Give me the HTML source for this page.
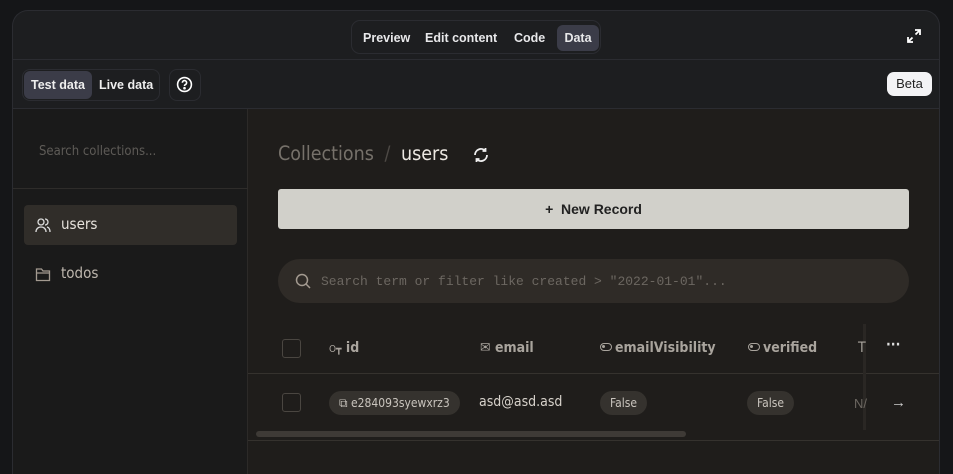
<!DOCTYPE html>
<html style="width:953px;height:474px;overflow:hidden"><head><style>
*{box-sizing:border-box;margin:0;padding:0}
body{width:953px;height:474px;background:#151618;font-family:"Liberation Sans",sans-serif;overflow:hidden;position:relative}
.panel{position:absolute;left:12px;top:10px;width:928px;height:464px;background:#1d1e20;border:1px solid #2b2c31;border-bottom:none;border-radius:16px 16px 0 0;overflow:hidden}
.abs{position:absolute}
.tabs{left:338px;top:9px;height:34px;width:250px;border:1px solid #2b2c31;border-radius:9px}
.tab{position:absolute;top:4px;height:26px;line-height:26px;font-size:12.5px;color:#e8e8ea;font-weight:bold}
.hl1{left:0;top:48px;width:100%;height:1px;background:#2b2c31}
.hl2{left:0;top:97px;width:100%;height:1px;background:#2b2c31}
.side{left:0;top:98px;width:235px;height:380px;background:#1a1a1a;border-right:1px solid #2c2a28}
.main{left:235px;top:98px;width:700px;height:380px;background:#1f1d1b}
.mono{font-family:"Liberation Mono",monospace}
.th{position:absolute;top:231px;font-size:14px;color:#a9a49d;font-family:"DejaVu Sans Condensed","DejaVu Sans",sans-serif;font-weight:bold}
.pill{position:absolute;background:#35322e;border-radius:12px;color:#c9c4bd;font-size:12px;height:24px;line-height:24px;padding:0 10px;font-family:"DejaVu Sans Condensed","DejaVu Sans",sans-serif}
.cb{position:absolute;width:19px;height:19px;border:1.5px solid #4a4641;border-radius:3px}
.tg{display:inline-block;width:12px;height:8px;border:1.3px solid #a9a49d;border-radius:4px;position:relative;margin-right:3px;vertical-align:1px}
.tg:after{content:"";position:absolute;left:1px;top:1px;width:3px;height:3px;background:#a9a49d;border-radius:2px}
</style></head><body>
<div class="panel">
 <div class="abs tabs">
  <div class="tab" style="left:11px">Preview</div>
  <div class="tab" style="left:73px">Edit content</div>
  <div class="tab" style="left:162px">Code</div>
  <div class="tab" style="left:205px;width:42px;background:#3b3c48;border-radius:6px;text-align:center">Data</div>
 </div>
 <svg class="abs" style="left:893px;top:17px" width="16" height="16" viewBox="0 0 16 16" fill="none" stroke="#fff" stroke-width="1.8"><path d="M9 2h5v5M14 2L9.5 6.5M7 14H2V9M2 14l4.5-4.5"/></svg>
 <div class="abs hl1"></div>
 <div class="abs" style="left:9px;top:58px;width:138px;height:32px;border:1px solid #2b2c31;border-radius:8px"></div>
 <div class="abs" style="left:11px;top:60px;width:68px;height:28px;background:#3b3c48;border-radius:6px;color:#eee;font-size:12.5px;font-weight:bold;line-height:28px;text-align:center">Test data</div>
 <div class="abs" style="left:86px;top:60px;color:#eee;font-size:12.5px;font-weight:bold;line-height:28px">Live data</div>
 <div class="abs" style="left:156px;top:58px;width:32px;height:32px;border:1px solid #2b2c31;border-radius:8px"></div>
 <svg class="abs" style="left:163px;top:65px" width="17" height="17" viewBox="0 0 16 16" fill="none" stroke="#fff" stroke-width="1.5"><circle cx="8" cy="8" r="6.5"/><path d="M6 6.3a2 2 0 1 1 2.6 1.9c-.5.2-.6.6-.6 1.2"/><circle cx="8" cy="11.5" r=".5" fill="#fff"/></svg>
 <div class="abs" style="left:874px;top:61px;width:45px;height:24px;background:#f3f3f5;border-radius:7px;color:#222;font-size:13px;line-height:24px;text-align:center">Beta</div>
 <div class="abs hl2"></div>
 <div class="abs side">
  <div class="abs" style="left:26px;top:35px;font-size:13px;color:#5e5b57;font-family:'DejaVu Sans Condensed','DejaVu Sans',sans-serif">Search collections...</div>
  <div class="abs" style="left:0;top:79px;width:235px;height:1px;background:#2e2c2a"></div>
  <div class="abs" style="left:11px;top:96px;width:213px;height:40px;background:#302d29;border-radius:4px"></div>
  <svg class="abs" style="left:22px;top:108px" width="16" height="16" viewBox="0 0 16 16" fill="none" stroke="#ddd" stroke-width="1.3"><circle cx="6" cy="5" r="3"/><path d="M1 15c0-3 2-5 5-5s5 2 5 5M10 2a3 3 0 0 1 0 6M12 10c2 .5 3 2.5 3 5"/></svg>
  <div class="abs" style="left:48px;top:106px;font-size:15px;color:#e6e2dc;font-family:'DejaVu Sans Condensed','DejaVu Sans',sans-serif">users</div>
  <svg class="abs" style="left:22px;top:158px" width="16" height="15" viewBox="0 0 16 15" fill="none" stroke="#a39a90" stroke-width="1.3"><path d="M1.5 2h5l1.5 2h6.5v9.5h-13zM1.5 6h13"/></svg>
  <div class="abs" style="left:48px;top:155px;font-size:15px;color:#bdb6ad;font-family:'DejaVu Sans Condensed','DejaVu Sans',sans-serif">todos</div>
 </div>
 <div class="abs main">
  <div class="abs" style="left:30px;top:33px;font-size:19.5px;color:#76716a;font-family:'DejaVu Sans Condensed','DejaVu Sans',sans-serif">Collections <span style="color:#4d4945;margin:0 5px">/</span> <span style="color:#ece8e2">users</span></div>
  <svg class="abs" style="left:224px;top:37px" width="18" height="18" viewBox="0 0 18 18" fill="none" stroke="#eee" stroke-width="1.8"><path d="M3 9a6 6 0 0 1 10.5-4M15 9a6 6 0 0 1-10.5 4M13.5 2v3h-3M4.5 16v-3h3"/></svg>
  <div class="abs" style="left:30px;top:80px;width:631px;height:40px;background:#d1d0ca;border-radius:3px;color:#222;font-size:14px;font-weight:bold;text-align:center;line-height:40px">+&nbsp; New Record</div>
  <div class="abs" style="left:30px;top:150px;width:631px;height:44px;background:#2f2b27;border-radius:22px"></div>
  <svg class="abs" style="left:47px;top:164px" width="16" height="16" viewBox="0 0 16 16" fill="none" stroke="#a39a90" stroke-width="1.5"><circle cx="7" cy="7" r="5.5"/><path d="M11 11l4 4"/></svg>
  <div class="abs mono" style="left:73px;top:165px;font-size:13px;color:#6c6761">Search term or filter like created &gt; "2022-01-01"...</div>
  <div class="abs" style="left:0;top:264px;width:700px;height:1px;background:#35322e"></div>
  <div class="abs" style="left:0;top:331px;width:700px;height:1px;background:#35322e"></div>
  <div class="abs" style="left:8px;top:322px;width:430px;height:6px;background:#3e3a36;border-radius:3px"></div>
  <div class="abs" style="left:615px;top:215px;width:3px;height:106px;background:#2a2724"></div>
 </div>
 <div class="cb" style="left:269px;top:328px"></div>
 <div class="th" style="left:316px;top:329px"><span style="font-size:10px;font-weight:normal">O┳</span> id</div>
 <div class="th" style="left:467px;top:329px"><span style="font-weight:normal">✉</span> email</div>
 <div class="th" style="left:587px;top:329px"><span class="tg"></span>emailVisibility</div>
 <div class="th" style="left:735px;top:329px"><span class="tg"></span>verified</div>
 <div class="th" style="left:845px;top:329px;font-weight:normal">T</div>
 <div class="th" style="left:873px;top:326px;color:#ddd">···</div>
 <div class="cb" style="left:269px;top:382px"></div>
 <div class="pill" style="left:316px;top:380px">⧉ e284093syewxrz3</div>
 <div class="abs" style="left:466px;top:383px;font-size:14px;color:#d6d1ca;font-family:'DejaVu Sans Condensed','DejaVu Sans',sans-serif">asd@asd.asd</div>
 <div class="pill" style="left:587px;top:380px">False</div>
 <div class="pill" style="left:734px;top:380px">False</div>
 <div class="abs" style="left:841px;top:385px;font-size:13px;color:#6c6761">N/</div>
 <div class="abs" style="left:878px;top:383px;font-size:15px;color:#ccc">→</div>
</div>
</body></html>
